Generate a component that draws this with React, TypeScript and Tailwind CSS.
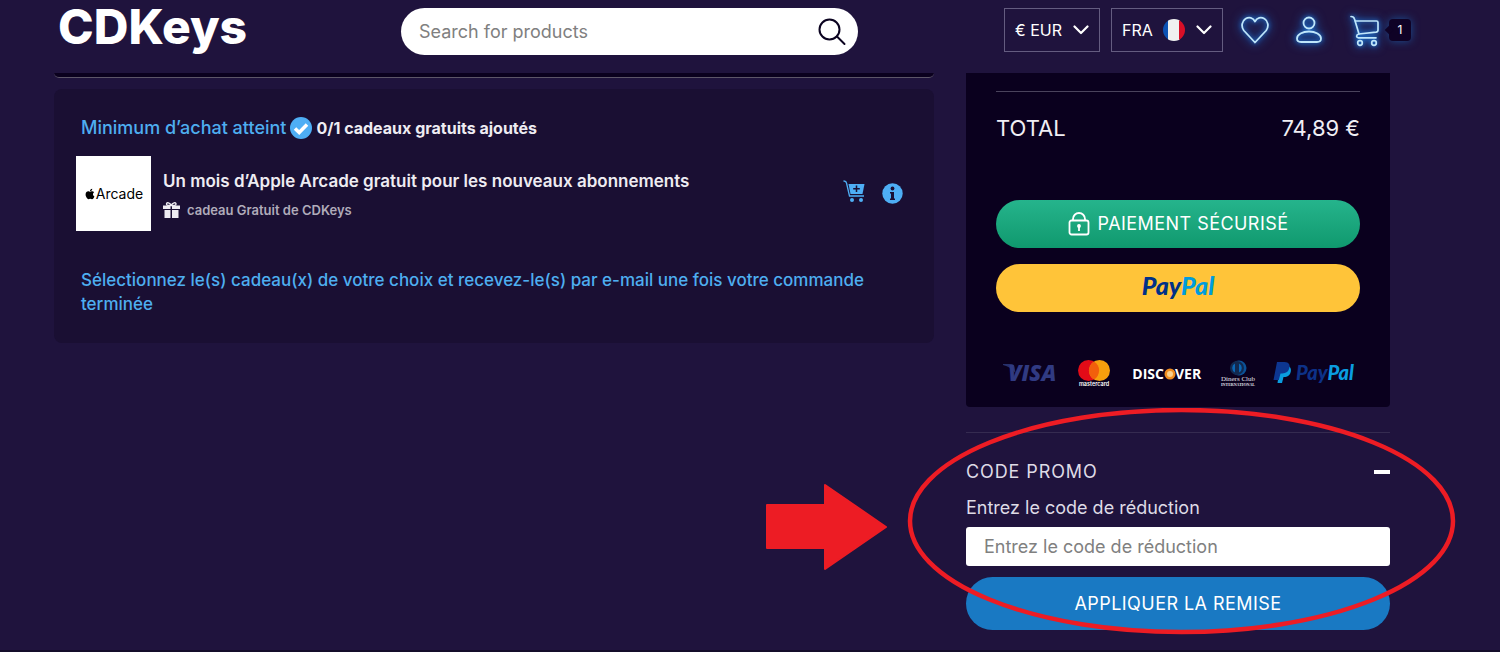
import React from 'react'
import { FaApple } from 'react-icons/fa'

const glow = 'overflow-visible fill-none stroke-[#bfe6fb] [filter:drop-shadow(0_0_2px_#1f7fe0)_drop-shadow(0_0_5px_#1b6fd0)]'

const HeartIcon = () => (
  <svg className={`w-7 h-7 ${glow}`} viewBox="0 0 28 28" strokeWidth="1.8" strokeLinejoin="round">
    <path d="M14 26.500L2.800 14.500C-.2 10.500 1 5 4.500 2.800C8 .700 12 1.500 14 5.500C16 1.500 20 .700 23.500 2.800C27 5 28.200 10.500 25.200 14.500Z" />
  </svg>
)

const UserIcon = () => (
  <svg className={`w-7 h-7 ${glow}`} viewBox="0 0 28 28" strokeWidth="1.8">
    <circle cx="14" cy="7" r="5.500" />
    <path d="M14 15.500C7.500 15.500 2 18.500 2 22.500C2 25 3.500 26 6 26H22C24.500 26 26 25 26 22.500C26 18.500 20.500 15.500 14 15.500Z" />
  </svg>
)

const CartIcon = () => (
  <svg className={`w-[30px] h-8 ${glow}`} viewBox="0 1 30 32" strokeWidth="1.700" strokeLinecap="round" strokeLinejoin="round">
    <path d="M1 1.500C3 1.500 4 2 4.500 4L9 19" />
    <path d="M5.500 6H26.500C27.500 6 28 6.500 28 7.500V15C28 16.500 27.500 17 26 17.200L8.800 19C6 19.500 6 22.800 8.500 22.800H26" />
    <circle cx="10" cy="28" r="2.300" />
    <circle cx="24" cy="28" r="2.300" />
  </svg>
)

const Chevron = () => (
  <svg className="pointer-events-none absolute right-[11px] top-[17px] w-4 h-[10px]" viewBox="0 0 16 10" fill="none" stroke="#fff" strokeWidth="2.200" strokeLinecap="round" strokeLinejoin="round">
    <path d="M1.500 1.500L8 8L14.500 1.500" />
  </svg>
)

const PayPalMark = ({ dark, light }: { dark: string; light: string }) => (
  <>
    <tspan fill={dark}>Pay</tspan>
    <tspan fill={light}>Pal</tspan>
  </>
)

const Header = () => (
  <header className="flex items-start h-[73px] pl-[58px] pr-[89px] pt-2">
    <a href="#" className="shrink-0 w-[343px] h-12 text-5xl leading-[38px] font-extrabold">CDKeys</a>
    <form className="relative flex-1 max-w-[457px] mr-8" onSubmit={(e) => e.preventDefault()}>
      <input
        type="search"
        aria-label="Search for products"
        placeholder="Search for products"
        className="w-full h-[47px] rounded-full bg-white pl-[18px] pr-14 text-lg text-gray-800 placeholder:text-[#808080] outline-none"
      />
      <button type="submit" aria-label="Search" className="absolute right-3 top-[10px]">
        <svg className="w-7 h-7" viewBox="0 0 28 28" fill="none" stroke="#0b0320" strokeWidth="2" strokeLinecap="round">
          <circle cx="11.500" cy="11.500" r="10" />
          <path d="M19 18.500L26.500 26" />
        </svg>
      </button>
    </form>
    <div className="ml-auto flex shrink-0">
      <div className="relative">
        <select aria-label="Devise" className="appearance-none w-24 h-11 border border-[#645c80] bg-transparent pl-[10px] text-base outline-none">
          <option>€ EUR</option>
        </select>
        <Chevron />
      </div>
      <div className="relative ml-[11px]">
        <select aria-label="Langue" className="appearance-none w-28 h-11 border border-[#645c80] bg-transparent pl-[10px] text-base outline-none">
          <option>FRA</option>
        </select>
        <svg className="pointer-events-none absolute left-[52px] top-[11px] w-[22px] h-[22px] rounded-full" viewBox="0 0 22 22">
          <path d="M0 0h6v22H0z" fill="#0d52b4" />
          <path d="M5 0h12v22H5z" fill="#f0f0f0" />
          <path d="M16 0h6v22h-6z" fill="#d80f27" />
        </svg>
        <Chevron />
      </div>
      <nav className="flex items-start ml-[18px] pt-2">
        <a href="#" aria-label="Favoris"><HeartIcon /></a>
        <a href="#" aria-label="Mon compte" className="ml-[26px]"><UserIcon /></a>
        <a href="#" aria-label="Panier" className="ml-[27px] flex">
          <CartIcon />
          <span className="relative ml-[9px] mt-[3px] flex items-center justify-center w-[22px] h-[22px] rounded bg-[#0f0226] text-xs shadow-[0_0_8px_#1b4f94]">
            <span className="absolute -left-[3px] top-2 w-[6px] h-[6px] rotate-45 bg-[#0f0226]" />
            <span className="relative">1</span>
          </span>
        </a>
      </nav>
    </div>
  </header>
)

const FreeGifts = () => (
  <section className="mt-[11px] rounded-lg bg-[#1a0f33] px-[22px] pt-[27px] pb-[27px]">
    <div className="flex items-center h-6 pl-[5px] text-lg">
      <span className="font-medium text-[#4eaef0]">Minimum d’achat atteint</span>
      <svg className="ml-1 mr-1 w-[22px] h-[22px]" viewBox="0 0 22 22">
        <circle cx="11" cy="11" r="11" fill="#4eaef5" />
        <path d="M5 11.500L9.200 15.500L17 7.500" fill="none" stroke="#fff" strokeWidth="3.500" />
      </svg>
      <span className="text-base font-bold text-[#eeecf2]">0/1 cadeaux gratuits ajoutés</span>
    </div>

    <div className="mt-4 flex">
      <div className="flex items-center justify-center shrink-0 w-[75px] h-[75px] bg-white text-black text-sm">
        <FaApple className="w-3 h-3" />
        <span>Arcade</span>
      </div>
      <div className="flex-1 ml-3 pt-[13px]">
        <h2 className="text-[17px] leading-6 font-semibold text-[#eeecf2]">Un mois d’Apple Arcade gratuit pour les nouveaux abonnements</h2>
        <p className="mt-[5px] flex items-center text-[13px] leading-6 font-semibold text-[#b0abba]">
          <svg className="w-[17px] h-4 mr-[7px]" viewBox="0 0 17 16">
            <path d="M0 3.500h7.500V7H0zM9 3.500h8V7H9zM1.500 8h6v8h-6zM9 8h6.500v8H9z" fill="#eeecf2" />
            <path d="M8.200 3.500C7 .500 3.500 0 3.500 2S6 3.500 8.200 3.500C9.500 .500 13 0 13 2S10.500 3.500 8.200 3.500" fill="none" stroke="#eeecf2" strokeWidth="1.400" />
          </svg>
          cadeau Gratuit de CDKeys
        </p>
      </div>
      <div className="flex items-start pt-6 pr-[9px]">
        <button aria-label="Ajouter au panier">
          <svg className="w-[22px] h-[22px]" viewBox="0 0 22 22">
            <path d="M.500 1C2.500 1 3.200 1.500 3.500 3L6.500 16H21" fill="none" stroke="#4eaef5" strokeWidth="1.300" />
            <path d="M5.500 4H21.500L19.500 14H7.500Z" fill="#4eaef5" />
            <path d="M13.500 5.500V12M10.200 8.800H16.800" stroke="#1a0f33" strokeWidth="1.500" />
            <circle cx="9" cy="20" r="2" fill="#4eaef5" />
            <circle cx="18" cy="20" r="2" fill="#4eaef5" />
          </svg>
        </button>
        <button aria-label="Informations" className="ml-[17px] mt-[3px]">
          <svg className="w-[21px] h-[21px]" viewBox="0 0 21 21">
            <circle cx="10.500" cy="10.500" r="10.200" fill="#4eaef5" />
            <circle cx="10.500" cy="5.500" r="1.900" fill="#1a0f33" />
            <path d="M8 9h4v6.500h1V17H8v-1.500h1v-5H8z" fill="#1a0f33" />
          </svg>
        </button>
      </div>
    </div>

    <p className="mt-[37px] px-[5px] text-[17px] leading-6 font-medium text-[#4eaef0]">
      Sélectionnez le(s) cadeau(x) de votre choix et recevez-le(s) par e-mail une fois votre commande terminée
    </p>
  </section>
)

const PaymentLogos = () => (
  <div className="mt-12 flex items-center gap-4 pl-[7px]">
    <svg className="shrink-0 w-[58px] h-7" viewBox="0 0 58 28" role="img" aria-label="Visa">
      <path d="M0 4h8q3 0 3.500 3l1 6Q8 7 0 5z" fill="#27306b" />
      <text x="5" y="21" fontFamily="Open Sans, sans-serif" fontSize="22" fontWeight="800" fontStyle="italic" fill="#303a82">VISA</text>
    </svg>
    <svg className="shrink-0 w-[34px] h-7" viewBox="0 0 34 28" role="img" aria-label="Mastercard">
      <circle cx="11.500" cy="10.500" r="10.500" fill="#e30b17" />
      <circle cx="22.500" cy="10.500" r="10.500" fill="#f79f0d" />
      <path d="M17 1.500a10.500 10.500 0 0 1 0 18a10.500 10.500 0 0 1 0-18" fill="#f25f0c" />
      <text x="17" y="26" fontFamily="Inter, sans-serif" fontSize="5.500" fontWeight="600" textAnchor="middle" fill="#fff">mastercard</text>
    </svg>
    <svg className="shrink-0 w-[76px] h-7" viewBox="0 0 76 28" role="img" aria-label="Discover">
      <circle cx="43" cy="14" r="5.500" fill="#f08c1e" />
      <circle cx="43" cy="14" r="3" fill="#fbd08a" />
      <g fontFamily="Open Sans, sans-serif" fontSize="14" fontWeight="700" fill="#fff">
        <text x="37" y="19" textAnchor="end">DISC</text>
        <text x="48" y="19">VER</text>
      </g>
    </svg>
    <svg className="shrink-0 w-[38px] h-7" viewBox="0 0 38 28" role="img" aria-label="Diners Club International">
      <circle cx="20" cy="8" r="7.500" fill="#0b5298" />
      <circle cx="18" cy="8" r="7" fill="#12294f" />
      <path d="M16 3.500a5 5 0 0 0 0 9zM20 3.500a5 5 0 0 1 0 9z" fill="#0b66b4" />
      <text x="19" y="20.500" fontFamily="Liberation Serif, serif" fontSize="7" textAnchor="middle" fill="#e4e2ea">Diners Club</text>
      <text x="19" y="25.500" fontFamily="Liberation Serif, serif" fontSize="4" fontWeight="700" textAnchor="middle" fill="#e4e2ea">INTERNATIONAL</text>
    </svg>
    <svg className="shrink-0 w-[86px] h-7" viewBox="0 0 86 28" role="img" aria-label="PayPal">
      <path d="M7 6H15C18.500 7 18.500 11 17 14C15.500 16.500 13 17 10.500 17L9 23H4.500Z" fill="#0a9de0" />
      <path d="M4 2H11.500C16 2 17.500 5 16 9C14.800 12.500 12 13.500 7.500 13.500L5.800 20H.5Z" fill="#0d3691" />
      <text x="23" y="20" fontFamily="Lato, sans-serif" fontSize="20" fontWeight="900" fontStyle="italic">
        <PayPalMark dark="#0d3187" light="#0a9de0" />
      </text>
    </svg>
  </div>
)

const OrderSummary = () => (
  <section className="rounded-b bg-[#0a001e] px-[30px] pt-[18px] pb-[19px]">
    <div className="border-t border-[#4a435c] pt-5 flex justify-between text-[22px] leading-8 text-[#f0eef4]">
      <span>TOTAL</span>
      <span>74,89 €</span>
    </div>
    <button className="mt-14 flex items-center justify-center w-full h-12 rounded-full bg-linear-to-b from-[#25b48c] to-[#0f996e] text-lg tracking-wide">
      <svg className="w-[22px] h-6 mr-2" viewBox="0 0 22 24" fill="none" stroke="#fff" strokeWidth="1.800">
        <rect x="1.500" y="8.500" width="19" height="14" rx="2" />
        <path d="M5 8.500V7a6 6 0 0 1 12 0v1.500" />
        <circle cx="11" cy="14" r="1.200" fill="#fff" strokeWidth="1.400" />
        <path d="M11 14v5" />
      </svg>
      PAIEMENT SÉCURISÉ
    </button>
    <button aria-label="PayPal" className="mt-4 flex items-center justify-center w-full h-12 rounded-full bg-[#ffc439]">
      <svg className="w-[100px] h-9" viewBox="0 0 100 36">
        <text x="50" y="25" textAnchor="middle" fontFamily="Lato, sans-serif" fontSize="25" fontWeight="900" fontStyle="italic">
          <PayPalMark dark="#003087" light="#009cde" />
        </text>
      </svg>
    </button>
    <PaymentLogos />
  </section>
)

const PromoCode = () => (
  <section className="relative mt-[25px] border-t border-[#352b50] pt-[27px]">
    <button className="flex items-center justify-between w-full h-6 text-lg tracking-wider text-[#dedbe6]">
      CODE PROMO
      <span className="w-4 h-1 bg-white" />
    </button>
    <label htmlFor="promo" className="mt-3 block text-lg leading-6 text-[#dedbe6]">Entrez le code de réduction</label>
    <input
      id="promo"
      type="text"
      placeholder="Entrez le code de réduction"
      className="mt-[7px] block w-full h-[39px] rounded-[3px] bg-white px-[18px] text-lg text-gray-800 placeholder:text-[#808080] outline-none"
    />
    <button className="mt-[11px] w-full h-[53px] rounded-full bg-[#1979c3] text-lg tracking-wide">APPLIQUER LA REMISE</button>

    {/* red highlight and arrow over the promo form */}
    <svg className="pointer-events-none absolute -left-[200px] -top-[25px] w-[692px] h-[230px]" viewBox="0 0 692 230">
      <ellipse cx="415.500" cy="113" rx="271.500" ry="111" fill="none" stroke="#ed1c24" strokeWidth="4.500" />
      <path d="M1 97H59V77L120 119L59 161V140H1Z" fill="#ed1c24" stroke="#ed1c24" strokeWidth="2" strokeLinejoin="round" />
    </svg>
  </section>
)

const App = () => {
  return (
    <div className="min-h-screen flex flex-col bg-[#1f133d] font-['Inter',sans-serif] text-white">
      <Header />
      <main className="flex-1 flex gap-8 pl-[54px] pr-[110px] pb-5">
        <div className="flex-1">
          <div className="h-[5px] rounded-b-md border-b border-[#5c5568] bg-[#0a001e]" />
          <FreeGifts />
        </div>
        <aside className="w-[424px] shrink-0">
          <OrderSummary />
          <PromoCode />
        </aside>
      </main>
      <footer className="h-[2px] bg-[#140d2a]" />
    </div>
  )
}

export default App
